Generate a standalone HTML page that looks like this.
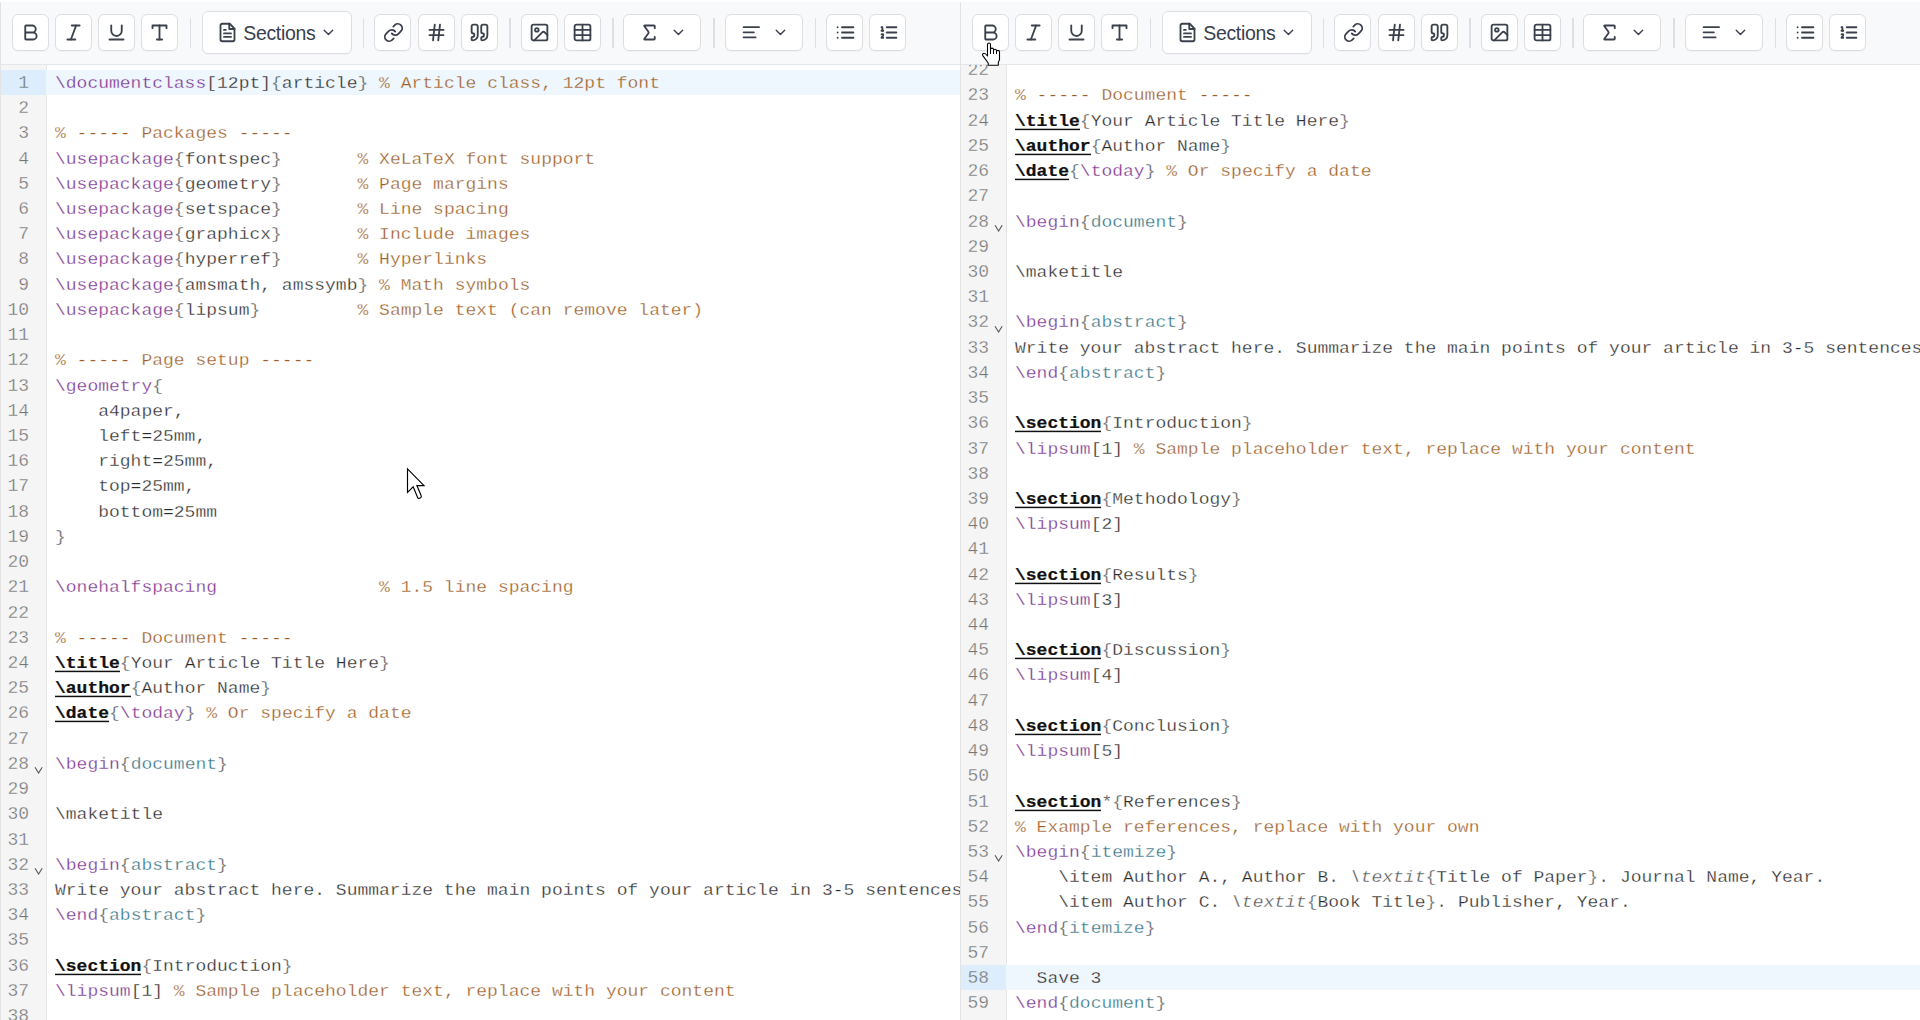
<!DOCTYPE html>
<html><head><meta charset="utf-8"><style>
*{margin:0;padding:0;box-sizing:border-box}
html,body{width:1920px;height:1020px;overflow:hidden;background:#fff}
body{position:relative;font-family:"Liberation Sans",sans-serif}
.pane{position:absolute;top:0;width:960px;height:1020px;overflow:hidden;background:#fff}
.pbord{position:absolute;left:0;top:2px;width:1px;height:1018px;background:#e3e3e3;z-index:5}
.tb{position:absolute;left:0;top:0;width:960px;height:65px;background:#f8f9fb;border-bottom:1px solid #e4e6ea}
.tb:before{content:'';position:absolute;left:0;top:0;width:960px;height:2px;background:#fff}
.btn{position:absolute;background:#fff;border:1px solid #dcdee2;border-radius:6px;box-shadow:0 1px 1px rgba(0,0,0,.03)}
.sep{position:absolute;top:17.5px;width:1.5px;height:30px;background:#dcdfe3}
.ic{position:absolute;color:#3a404c}
.stxt{position:absolute;font-size:19.5px;color:#3a404c;line-height:24px;letter-spacing:-0.35px}
.ed{position:absolute;left:0;top:65px;width:960px;height:955px;overflow:hidden}
.gut{position:absolute;left:0;top:0;width:47px;height:955px;background:#f5f5f5;border-right:1px solid #e6e6e6}
.ln{-webkit-text-stroke:0.3px #fff;position:absolute;left:0;width:960px;height:25.22px;font-family:"Liberation Mono",monospace;font-size:18px;line-height:25.2px;white-space:pre;color:#2b2b2b}
.ln.act{background:#eef6fe;-webkit-text-stroke-color:#eef6fe}
.ln.act .num{background:#ddedfc;-webkit-text-stroke-color:#ddedfc}
.num{-webkit-text-stroke-color:#f5f5f5;position:absolute;left:0;top:1px;width:29px;height:25.2px;text-align:right;color:#767676;display:block;padding-left:0}
.ln.act .num{width:46px;padding-right:17px;top:0;padding-top:1px;height:25.22px}
.fold{position:absolute;left:34.2px;top:15.2px}
.code{position:absolute;left:55px;top:1px;transform:scaleY(0.88);transform-origin:0 17.4px}
.cmd{color:#7a3290}
.br{color:#555d62}
.c{color:#9c5d26}
.env{color:#347486}
.b{font-weight:bold;color:#111;-webkit-text-stroke:0.25px #111;background:linear-gradient(#111,#111) 0 18.2px/100% 1.7px no-repeat}
.it{font-style:italic;color:#555}
.cur{position:absolute;left:0;top:0}
</style></head><body>
<div class="pane" style="left:0px">
<div class="tb">
<div class="btn" style="left:11.5px;top:14px;width:37px;height:37px"></div>
<svg class="ic" style="left:19.7px;top:21.5px" width="21" height="21" viewBox="0 0 24 24" fill="none" stroke="currentColor" stroke-width="2.1" stroke-linecap="round" stroke-linejoin="round"><path d="M6 12h9a4 4 0 0 1 0 8H7a1 1 0 0 1-1-1V5a1 1 0 0 1 1-1h7a4 4 0 0 1 0 8"/></svg>
<div class="btn" style="left:54.7px;top:14px;width:37px;height:37px"></div>
<svg class="ic" style="left:62.9px;top:21.5px" width="21" height="21" viewBox="0 0 24 24" fill="none" stroke="currentColor" stroke-width="2.1" stroke-linecap="round" stroke-linejoin="round"><line x1="19" x2="10" y1="4" y2="4"/><line x1="14" x2="5" y1="20" y2="20"/><line x1="15" x2="9" y1="4" y2="20"/></svg>
<div class="btn" style="left:97.9px;top:14px;width:37px;height:37px"></div>
<svg class="ic" style="left:106.1px;top:21.5px" width="21" height="21" viewBox="0 0 24 24" fill="none" stroke="currentColor" stroke-width="2.1" stroke-linecap="round" stroke-linejoin="round"><path d="M6 4v6a6 6 0 0 0 12 0V4"/><line x1="4" x2="20" y1="20" y2="20"/></svg>
<div class="btn" style="left:141.10000000000002px;top:14px;width:37px;height:37px"></div>
<svg class="ic" style="left:149.3px;top:21.5px" width="21" height="21" viewBox="0 0 24 24" fill="none" stroke="currentColor" stroke-width="2.1" stroke-linecap="round" stroke-linejoin="round"><polyline points="4 7 4 4 20 4 20 7"/><line x1="9" x2="15" y1="20" y2="20"/><line x1="12" x2="12" y1="4" y2="20"/></svg>
<div class="sep" style="left:189.5px"></div>
<div class="btn" style="left:201.5px;top:11px;width:150px;height:42.5px"></div>
<svg class="ic" style="left:217.3px;top:21.5px" width="21" height="21" viewBox="0 0 24 24" fill="none" stroke="currentColor" stroke-width="2.1" stroke-linecap="round" stroke-linejoin="round"><path d="M14.5 2H6a2 2 0 0 0-2 2v16a2 2 0 0 0 2 2h12a2 2 0 0 0 2-2V7.5L14.5 2z"/><polyline points="14 2 14 8 20 8"/><line x1="16" x2="8" y1="13" y2="13"/><line x1="16" x2="8" y1="17" y2="17"/><line x1="10" x2="8" y1="9" y2="9"/></svg>
<div class="stxt" style="left:243.3px;top:21px">Sections</div>
<svg class="ic" style="left:319.8px;top:24.2px" width="16.9" height="16.9" viewBox="0 0 24 24" fill="none" stroke="currentColor" stroke-width="2" stroke-linecap="round" stroke-linejoin="round"><path d="m6 9 6 6 6-6"/></svg>
<div class="sep" style="left:362.5px"></div>
<div class="btn" style="left:374.4px;top:14px;width:37px;height:37px"></div>
<svg class="ic" style="left:382.6px;top:21.5px" width="21" height="21" viewBox="0 0 24 24" fill="none" stroke="currentColor" stroke-width="2.1" stroke-linecap="round" stroke-linejoin="round"><path d="M10 13a5 5 0 0 0 7.54.54l3-3a5 5 0 0 0-7.07-7.07l-1.72 1.71"/><path d="M14 11a5 5 0 0 0-7.54-.54l-3 3a5 5 0 0 0 7.07 7.07l1.71-1.71"/></svg>
<div class="btn" style="left:417.5px;top:14px;width:37px;height:37px"></div>
<svg class="ic" style="left:425.7px;top:21.5px" width="21" height="21" viewBox="0 0 24 24" fill="none" stroke="currentColor" stroke-width="2.1" stroke-linecap="round" stroke-linejoin="round"><line x1="4" x2="20" y1="9" y2="9"/><line x1="4" x2="20" y1="15" y2="15"/><line x1="10" x2="8" y1="3" y2="21"/><line x1="16" x2="14" y1="3" y2="21"/></svg>
<div class="btn" style="left:460.59999999999997px;top:14px;width:37px;height:37px"></div>
<svg class="ic" style="left:468.8px;top:21.5px" width="21" height="21" viewBox="0 0 24 24" fill="none" stroke="currentColor" stroke-width="2.1" stroke-linecap="round" stroke-linejoin="round"><path d="M16 3a2 2 0 0 0-2 2v6a2 2 0 0 0 2 2 1 1 0 0 1 1 1v1a2 2 0 0 1-2 2 1 1 0 0 0-1 1v2a1 1 0 0 0 1 1 6 6 0 0 0 6-6V5a2 2 0 0 0-2-2z"/><path d="M5 3a2 2 0 0 0-2 2v6a2 2 0 0 0 2 2 1 1 0 0 1 1 1v1a2 2 0 0 1-2 2 1 1 0 0 0-1 1v2a1 1 0 0 0 1 1 6 6 0 0 0 6-6V5a2 2 0 0 0-2-2z"/></svg>
<div class="sep" style="left:509px"></div>
<div class="btn" style="left:520.6px;top:14px;width:37px;height:37px"></div>
<svg class="ic" style="left:528.8px;top:21.5px" width="21" height="21" viewBox="0 0 24 24" fill="none" stroke="currentColor" stroke-width="2.1" stroke-linecap="round" stroke-linejoin="round"><rect width="18" height="18" x="3" y="3" rx="2" ry="2"/><circle cx="9" cy="9" r="2"/><path d="m21 15-3.086-3.086a2 2 0 0 0-2.828 0L6 21"/></svg>
<div class="btn" style="left:563.6px;top:14px;width:37px;height:37px"></div>
<svg class="ic" style="left:571.8px;top:21.5px" width="21" height="21" viewBox="0 0 24 24" fill="none" stroke="currentColor" stroke-width="2.1" stroke-linecap="round" stroke-linejoin="round"><path d="M12 3v18"/><rect width="18" height="18" x="3" y="3" rx="2"/><path d="M3 9h18"/><path d="M3 15h18"/></svg>
<div class="sep" style="left:612px"></div>
<div class="btn" style="left:623.3px;top:14px;width:78px;height:37px"></div>
<svg class="ic" style="left:639.2px;top:21.5px" width="21" height="21" viewBox="0 0 24 24" fill="none" stroke="currentColor" stroke-width="2.1" stroke-linecap="round" stroke-linejoin="round"><path d="M18 7V5a1 1 0 0 0-1-1H6.5a.5.5 0 0 0-.4.8l4.5 6a2 2 0 0 1 0 2.4l-4.5 6a.5.5 0 0 0 .4.8H17a1 1 0 0 0 1-1v-2"/></svg>
<svg class="ic" style="left:669.6px;top:24.2px" width="16.9" height="16.9" viewBox="0 0 24 24" fill="none" stroke="currentColor" stroke-width="2" stroke-linecap="round" stroke-linejoin="round"><path d="m6 9 6 6 6-6"/></svg>
<div class="sep" style="left:713px"></div>
<div class="btn" style="left:725.3px;top:14px;width:78px;height:37px"></div>
<svg class="ic" style="left:741.1px;top:21.8px" width="20.6" height="20.6" viewBox="0 0 24 24" fill="none" stroke="currentColor" stroke-width="2.1" stroke-linecap="round" stroke-linejoin="round"><line x1="21" x2="3" y1="6" y2="6"/><line x1="15" x2="3" y1="12" y2="12"/><line x1="17" x2="3" y1="18" y2="18"/></svg>
<svg class="ic" style="left:771.6px;top:24.2px" width="16.9" height="16.9" viewBox="0 0 24 24" fill="none" stroke="currentColor" stroke-width="2" stroke-linecap="round" stroke-linejoin="round"><path d="m6 9 6 6 6-6"/></svg>
<div class="sep" style="left:814.8px"></div>
<div class="btn" style="left:826.4px;top:14px;width:37px;height:37px"></div>
<svg class="ic" style="left:834.6px;top:21.5px" width="21" height="21" viewBox="0 0 24 24" fill="none" stroke="currentColor" stroke-width="2.1" stroke-linecap="round" stroke-linejoin="round"><path d="M3 12h.01"/><path d="M3 18h.01"/><path d="M3 6h.01"/><path d="M8 12h13"/><path d="M8 18h13"/><path d="M8 6h13"/></svg>
<div class="btn" style="left:869.4px;top:14px;width:37px;height:37px"></div>
<svg class="ic" style="left:877.6px;top:21.5px" width="21" height="21" viewBox="0 0 24 24" fill="none" stroke="currentColor" stroke-width="2.1" stroke-linecap="round" stroke-linejoin="round"><path d="M10 12h11"/><path d="M10 18h11"/><path d="M10 6h11"/><path d="M4 10h2"/><path d="M4 6h1v4"/><path d="M6 18H4c0-1 2-2 2-3s-1-1.5-2-1"/></svg>
</div>
<div class="ed">
<div class="gut"></div>
<div class="ln act" style="top:4.90px"><span class="num">1</span><span class="code"><span class="cmd">\documentclass</span>[12pt]<span class="br">{</span>article<span class="br">}</span> <span class="c">% Article class, 12pt font</span></span></div>
<div class="ln" style="top:30.12px"><span class="num">2</span><span class="code"></span></div>
<div class="ln" style="top:55.34px"><span class="num">3</span><span class="code"><span class="c">% ----- Packages -----</span></span></div>
<div class="ln" style="top:80.56px"><span class="num">4</span><span class="code"><span class="cmd">\usepackage</span><span class="br">{</span>fontspec<span class="br">}</span>       <span class="c">% XeLaTeX font support</span></span></div>
<div class="ln" style="top:105.78px"><span class="num">5</span><span class="code"><span class="cmd">\usepackage</span><span class="br">{</span>geometry<span class="br">}</span>       <span class="c">% Page margins</span></span></div>
<div class="ln" style="top:131.00px"><span class="num">6</span><span class="code"><span class="cmd">\usepackage</span><span class="br">{</span>setspace<span class="br">}</span>       <span class="c">% Line spacing</span></span></div>
<div class="ln" style="top:156.22px"><span class="num">7</span><span class="code"><span class="cmd">\usepackage</span><span class="br">{</span>graphicx<span class="br">}</span>       <span class="c">% Include images</span></span></div>
<div class="ln" style="top:181.44px"><span class="num">8</span><span class="code"><span class="cmd">\usepackage</span><span class="br">{</span>hyperref<span class="br">}</span>       <span class="c">% Hyperlinks</span></span></div>
<div class="ln" style="top:206.66px"><span class="num">9</span><span class="code"><span class="cmd">\usepackage</span><span class="br">{</span>amsmath, amssymb<span class="br">}</span> <span class="c">% Math symbols</span></span></div>
<div class="ln" style="top:231.88px"><span class="num">10</span><span class="code"><span class="cmd">\usepackage</span><span class="br">{</span>lipsum<span class="br">}</span>         <span class="c">% Sample text (can remove later)</span></span></div>
<div class="ln" style="top:257.10px"><span class="num">11</span><span class="code"></span></div>
<div class="ln" style="top:282.32px"><span class="num">12</span><span class="code"><span class="c">% ----- Page setup -----</span></span></div>
<div class="ln" style="top:307.54px"><span class="num">13</span><span class="code"><span class="cmd">\geometry</span><span class="br">{</span></span></div>
<div class="ln" style="top:332.76px"><span class="num">14</span><span class="code">    a4paper,</span></div>
<div class="ln" style="top:357.98px"><span class="num">15</span><span class="code">    left=25mm,</span></div>
<div class="ln" style="top:383.20px"><span class="num">16</span><span class="code">    right=25mm,</span></div>
<div class="ln" style="top:408.42px"><span class="num">17</span><span class="code">    top=25mm,</span></div>
<div class="ln" style="top:433.64px"><span class="num">18</span><span class="code">    bottom=25mm</span></div>
<div class="ln" style="top:458.86px"><span class="num">19</span><span class="code"><span class="br">}</span></span></div>
<div class="ln" style="top:484.08px"><span class="num">20</span><span class="code"></span></div>
<div class="ln" style="top:509.30px"><span class="num">21</span><span class="code"><span class="cmd">\onehalfspacing</span>               <span class="c">% 1.5 line spacing</span></span></div>
<div class="ln" style="top:534.52px"><span class="num">22</span><span class="code"></span></div>
<div class="ln" style="top:559.74px"><span class="num">23</span><span class="code"><span class="c">% ----- Document -----</span></span></div>
<div class="ln" style="top:584.96px"><span class="num">24</span><span class="code"><span class="b">\title</span><span class="br">{</span>Your Article Title Here<span class="br">}</span></span></div>
<div class="ln" style="top:610.18px"><span class="num">25</span><span class="code"><span class="b">\author</span><span class="br">{</span>Author Name<span class="br">}</span></span></div>
<div class="ln" style="top:635.40px"><span class="num">26</span><span class="code"><span class="b">\date</span><span class="br">{</span><span class="cmd">\today</span><span class="br">}</span> <span class="c">% Or specify a date</span></span></div>
<div class="ln" style="top:660.62px"><span class="num">27</span><span class="code"></span></div>
<div class="ln" style="top:685.84px"><span class="num">28</span><svg class="fold" width="10" height="8" viewBox="0 0 10 8"><path d="M1 1.2 L4.6 7 L8.2 1.2" fill="none" stroke="#5a5a5a" stroke-width="1.15"/></svg><span class="code"><span class="cmd">\begin</span><span class="br">{</span><span class="env">document</span><span class="br">}</span></span></div>
<div class="ln" style="top:711.06px"><span class="num">29</span><span class="code"></span></div>
<div class="ln" style="top:736.28px"><span class="num">30</span><span class="code">\maketitle</span></div>
<div class="ln" style="top:761.50px"><span class="num">31</span><span class="code"></span></div>
<div class="ln" style="top:786.72px"><span class="num">32</span><svg class="fold" width="10" height="8" viewBox="0 0 10 8"><path d="M1 1.2 L4.6 7 L8.2 1.2" fill="none" stroke="#5a5a5a" stroke-width="1.15"/></svg><span class="code"><span class="cmd">\begin</span><span class="br">{</span><span class="env">abstract</span><span class="br">}</span></span></div>
<div class="ln" style="top:811.94px"><span class="num">33</span><span class="code">Write your abstract here. Summarize the main points of your article in 3-5 sentences.</span></div>
<div class="ln" style="top:837.16px"><span class="num">34</span><span class="code"><span class="cmd">\end</span><span class="br">{</span><span class="env">abstract</span><span class="br">}</span></span></div>
<div class="ln" style="top:862.38px"><span class="num">35</span><span class="code"></span></div>
<div class="ln" style="top:887.60px"><span class="num">36</span><span class="code"><span class="b">\section</span><span class="br">{</span>Introduction<span class="br">}</span></span></div>
<div class="ln" style="top:912.82px"><span class="num">37</span><span class="code"><span class="cmd">\lipsum</span>[1] <span class="c">% Sample placeholder text, replace with your content</span></span></div>
<div class="ln" style="top:938.04px"><span class="num">38</span><span class="code"></span></div>
</div><div class="pbord"></div></div>
<div class="pane" style="left:960px">
<div class="tb">
<div class="btn" style="left:11.5px;top:14px;width:37px;height:37px"></div>
<svg class="ic" style="left:19.7px;top:21.5px" width="21" height="21" viewBox="0 0 24 24" fill="none" stroke="currentColor" stroke-width="2.1" stroke-linecap="round" stroke-linejoin="round"><path d="M6 12h9a4 4 0 0 1 0 8H7a1 1 0 0 1-1-1V5a1 1 0 0 1 1-1h7a4 4 0 0 1 0 8"/></svg>
<div class="btn" style="left:54.7px;top:14px;width:37px;height:37px"></div>
<svg class="ic" style="left:62.9px;top:21.5px" width="21" height="21" viewBox="0 0 24 24" fill="none" stroke="currentColor" stroke-width="2.1" stroke-linecap="round" stroke-linejoin="round"><line x1="19" x2="10" y1="4" y2="4"/><line x1="14" x2="5" y1="20" y2="20"/><line x1="15" x2="9" y1="4" y2="20"/></svg>
<div class="btn" style="left:97.9px;top:14px;width:37px;height:37px"></div>
<svg class="ic" style="left:106.1px;top:21.5px" width="21" height="21" viewBox="0 0 24 24" fill="none" stroke="currentColor" stroke-width="2.1" stroke-linecap="round" stroke-linejoin="round"><path d="M6 4v6a6 6 0 0 0 12 0V4"/><line x1="4" x2="20" y1="20" y2="20"/></svg>
<div class="btn" style="left:141.10000000000002px;top:14px;width:37px;height:37px"></div>
<svg class="ic" style="left:149.3px;top:21.5px" width="21" height="21" viewBox="0 0 24 24" fill="none" stroke="currentColor" stroke-width="2.1" stroke-linecap="round" stroke-linejoin="round"><polyline points="4 7 4 4 20 4 20 7"/><line x1="9" x2="15" y1="20" y2="20"/><line x1="12" x2="12" y1="4" y2="20"/></svg>
<div class="sep" style="left:189.5px"></div>
<div class="btn" style="left:201.5px;top:11px;width:150px;height:42.5px"></div>
<svg class="ic" style="left:217.3px;top:21.5px" width="21" height="21" viewBox="0 0 24 24" fill="none" stroke="currentColor" stroke-width="2.1" stroke-linecap="round" stroke-linejoin="round"><path d="M14.5 2H6a2 2 0 0 0-2 2v16a2 2 0 0 0 2 2h12a2 2 0 0 0 2-2V7.5L14.5 2z"/><polyline points="14 2 14 8 20 8"/><line x1="16" x2="8" y1="13" y2="13"/><line x1="16" x2="8" y1="17" y2="17"/><line x1="10" x2="8" y1="9" y2="9"/></svg>
<div class="stxt" style="left:243.3px;top:21px">Sections</div>
<svg class="ic" style="left:319.8px;top:24.2px" width="16.9" height="16.9" viewBox="0 0 24 24" fill="none" stroke="currentColor" stroke-width="2" stroke-linecap="round" stroke-linejoin="round"><path d="m6 9 6 6 6-6"/></svg>
<div class="sep" style="left:362.5px"></div>
<div class="btn" style="left:374.4px;top:14px;width:37px;height:37px"></div>
<svg class="ic" style="left:382.6px;top:21.5px" width="21" height="21" viewBox="0 0 24 24" fill="none" stroke="currentColor" stroke-width="2.1" stroke-linecap="round" stroke-linejoin="round"><path d="M10 13a5 5 0 0 0 7.54.54l3-3a5 5 0 0 0-7.07-7.07l-1.72 1.71"/><path d="M14 11a5 5 0 0 0-7.54-.54l-3 3a5 5 0 0 0 7.07 7.07l1.71-1.71"/></svg>
<div class="btn" style="left:417.5px;top:14px;width:37px;height:37px"></div>
<svg class="ic" style="left:425.7px;top:21.5px" width="21" height="21" viewBox="0 0 24 24" fill="none" stroke="currentColor" stroke-width="2.1" stroke-linecap="round" stroke-linejoin="round"><line x1="4" x2="20" y1="9" y2="9"/><line x1="4" x2="20" y1="15" y2="15"/><line x1="10" x2="8" y1="3" y2="21"/><line x1="16" x2="14" y1="3" y2="21"/></svg>
<div class="btn" style="left:460.59999999999997px;top:14px;width:37px;height:37px"></div>
<svg class="ic" style="left:468.8px;top:21.5px" width="21" height="21" viewBox="0 0 24 24" fill="none" stroke="currentColor" stroke-width="2.1" stroke-linecap="round" stroke-linejoin="round"><path d="M16 3a2 2 0 0 0-2 2v6a2 2 0 0 0 2 2 1 1 0 0 1 1 1v1a2 2 0 0 1-2 2 1 1 0 0 0-1 1v2a1 1 0 0 0 1 1 6 6 0 0 0 6-6V5a2 2 0 0 0-2-2z"/><path d="M5 3a2 2 0 0 0-2 2v6a2 2 0 0 0 2 2 1 1 0 0 1 1 1v1a2 2 0 0 1-2 2 1 1 0 0 0-1 1v2a1 1 0 0 0 1 1 6 6 0 0 0 6-6V5a2 2 0 0 0-2-2z"/></svg>
<div class="sep" style="left:509px"></div>
<div class="btn" style="left:520.6px;top:14px;width:37px;height:37px"></div>
<svg class="ic" style="left:528.8px;top:21.5px" width="21" height="21" viewBox="0 0 24 24" fill="none" stroke="currentColor" stroke-width="2.1" stroke-linecap="round" stroke-linejoin="round"><rect width="18" height="18" x="3" y="3" rx="2" ry="2"/><circle cx="9" cy="9" r="2"/><path d="m21 15-3.086-3.086a2 2 0 0 0-2.828 0L6 21"/></svg>
<div class="btn" style="left:563.6px;top:14px;width:37px;height:37px"></div>
<svg class="ic" style="left:571.8px;top:21.5px" width="21" height="21" viewBox="0 0 24 24" fill="none" stroke="currentColor" stroke-width="2.1" stroke-linecap="round" stroke-linejoin="round"><path d="M12 3v18"/><rect width="18" height="18" x="3" y="3" rx="2"/><path d="M3 9h18"/><path d="M3 15h18"/></svg>
<div class="sep" style="left:612px"></div>
<div class="btn" style="left:623.3px;top:14px;width:78px;height:37px"></div>
<svg class="ic" style="left:639.2px;top:21.5px" width="21" height="21" viewBox="0 0 24 24" fill="none" stroke="currentColor" stroke-width="2.1" stroke-linecap="round" stroke-linejoin="round"><path d="M18 7V5a1 1 0 0 0-1-1H6.5a.5.5 0 0 0-.4.8l4.5 6a2 2 0 0 1 0 2.4l-4.5 6a.5.5 0 0 0 .4.8H17a1 1 0 0 0 1-1v-2"/></svg>
<svg class="ic" style="left:669.6px;top:24.2px" width="16.9" height="16.9" viewBox="0 0 24 24" fill="none" stroke="currentColor" stroke-width="2" stroke-linecap="round" stroke-linejoin="round"><path d="m6 9 6 6 6-6"/></svg>
<div class="sep" style="left:713px"></div>
<div class="btn" style="left:725.3px;top:14px;width:78px;height:37px"></div>
<svg class="ic" style="left:741.1px;top:21.8px" width="20.6" height="20.6" viewBox="0 0 24 24" fill="none" stroke="currentColor" stroke-width="2.1" stroke-linecap="round" stroke-linejoin="round"><line x1="21" x2="3" y1="6" y2="6"/><line x1="15" x2="3" y1="12" y2="12"/><line x1="17" x2="3" y1="18" y2="18"/></svg>
<svg class="ic" style="left:771.6px;top:24.2px" width="16.9" height="16.9" viewBox="0 0 24 24" fill="none" stroke="currentColor" stroke-width="2" stroke-linecap="round" stroke-linejoin="round"><path d="m6 9 6 6 6-6"/></svg>
<div class="sep" style="left:814.8px"></div>
<div class="btn" style="left:826.4px;top:14px;width:37px;height:37px"></div>
<svg class="ic" style="left:834.6px;top:21.5px" width="21" height="21" viewBox="0 0 24 24" fill="none" stroke="currentColor" stroke-width="2.1" stroke-linecap="round" stroke-linejoin="round"><path d="M3 12h.01"/><path d="M3 18h.01"/><path d="M3 6h.01"/><path d="M8 12h13"/><path d="M8 18h13"/><path d="M8 6h13"/></svg>
<div class="btn" style="left:869.4px;top:14px;width:37px;height:37px"></div>
<svg class="ic" style="left:877.6px;top:21.5px" width="21" height="21" viewBox="0 0 24 24" fill="none" stroke="currentColor" stroke-width="2.1" stroke-linecap="round" stroke-linejoin="round"><path d="M10 12h11"/><path d="M10 18h11"/><path d="M10 6h11"/><path d="M4 10h2"/><path d="M4 6h1v4"/><path d="M6 18H4c0-1 2-2 2-3s-1-1.5-2-1"/></svg>
</div>
<div class="ed">
<div class="gut"></div>
<div class="ln" style="top:-7.80px"><span class="num">22</span><span class="code"></span></div>
<div class="ln" style="top:17.42px"><span class="num">23</span><span class="code"><span class="c">% ----- Document -----</span></span></div>
<div class="ln" style="top:42.64px"><span class="num">24</span><span class="code"><span class="b">\title</span><span class="br">{</span>Your Article Title Here<span class="br">}</span></span></div>
<div class="ln" style="top:67.86px"><span class="num">25</span><span class="code"><span class="b">\author</span><span class="br">{</span>Author Name<span class="br">}</span></span></div>
<div class="ln" style="top:93.08px"><span class="num">26</span><span class="code"><span class="b">\date</span><span class="br">{</span><span class="cmd">\today</span><span class="br">}</span> <span class="c">% Or specify a date</span></span></div>
<div class="ln" style="top:118.30px"><span class="num">27</span><span class="code"></span></div>
<div class="ln" style="top:143.52px"><span class="num">28</span><svg class="fold" width="10" height="8" viewBox="0 0 10 8"><path d="M1 1.2 L4.6 7 L8.2 1.2" fill="none" stroke="#5a5a5a" stroke-width="1.15"/></svg><span class="code"><span class="cmd">\begin</span><span class="br">{</span><span class="env">document</span><span class="br">}</span></span></div>
<div class="ln" style="top:168.74px"><span class="num">29</span><span class="code"></span></div>
<div class="ln" style="top:193.96px"><span class="num">30</span><span class="code">\maketitle</span></div>
<div class="ln" style="top:219.18px"><span class="num">31</span><span class="code"></span></div>
<div class="ln" style="top:244.40px"><span class="num">32</span><svg class="fold" width="10" height="8" viewBox="0 0 10 8"><path d="M1 1.2 L4.6 7 L8.2 1.2" fill="none" stroke="#5a5a5a" stroke-width="1.15"/></svg><span class="code"><span class="cmd">\begin</span><span class="br">{</span><span class="env">abstract</span><span class="br">}</span></span></div>
<div class="ln" style="top:269.62px"><span class="num">33</span><span class="code">Write your abstract here. Summarize the main points of your article in 3-5 sentences.</span></div>
<div class="ln" style="top:294.84px"><span class="num">34</span><span class="code"><span class="cmd">\end</span><span class="br">{</span><span class="env">abstract</span><span class="br">}</span></span></div>
<div class="ln" style="top:320.06px"><span class="num">35</span><span class="code"></span></div>
<div class="ln" style="top:345.28px"><span class="num">36</span><span class="code"><span class="b">\section</span><span class="br">{</span>Introduction<span class="br">}</span></span></div>
<div class="ln" style="top:370.50px"><span class="num">37</span><span class="code"><span class="cmd">\lipsum</span>[1] <span class="c">% Sample placeholder text, replace with your content</span></span></div>
<div class="ln" style="top:395.72px"><span class="num">38</span><span class="code"></span></div>
<div class="ln" style="top:420.94px"><span class="num">39</span><span class="code"><span class="b">\section</span><span class="br">{</span>Methodology<span class="br">}</span></span></div>
<div class="ln" style="top:446.16px"><span class="num">40</span><span class="code"><span class="cmd">\lipsum</span>[2]</span></div>
<div class="ln" style="top:471.38px"><span class="num">41</span><span class="code"></span></div>
<div class="ln" style="top:496.60px"><span class="num">42</span><span class="code"><span class="b">\section</span><span class="br">{</span>Results<span class="br">}</span></span></div>
<div class="ln" style="top:521.82px"><span class="num">43</span><span class="code"><span class="cmd">\lipsum</span>[3]</span></div>
<div class="ln" style="top:547.04px"><span class="num">44</span><span class="code"></span></div>
<div class="ln" style="top:572.26px"><span class="num">45</span><span class="code"><span class="b">\section</span><span class="br">{</span>Discussion<span class="br">}</span></span></div>
<div class="ln" style="top:597.48px"><span class="num">46</span><span class="code"><span class="cmd">\lipsum</span>[4]</span></div>
<div class="ln" style="top:622.70px"><span class="num">47</span><span class="code"></span></div>
<div class="ln" style="top:647.92px"><span class="num">48</span><span class="code"><span class="b">\section</span><span class="br">{</span>Conclusion<span class="br">}</span></span></div>
<div class="ln" style="top:673.14px"><span class="num">49</span><span class="code"><span class="cmd">\lipsum</span>[5]</span></div>
<div class="ln" style="top:698.36px"><span class="num">50</span><span class="code"></span></div>
<div class="ln" style="top:723.58px"><span class="num">51</span><span class="code"><span class="b">\section</span>*<span class="br">{</span>References<span class="br">}</span></span></div>
<div class="ln" style="top:748.80px"><span class="num">52</span><span class="code"><span class="c">% Example references, replace with your own</span></span></div>
<div class="ln" style="top:774.02px"><span class="num">53</span><svg class="fold" width="10" height="8" viewBox="0 0 10 8"><path d="M1 1.2 L4.6 7 L8.2 1.2" fill="none" stroke="#5a5a5a" stroke-width="1.15"/></svg><span class="code"><span class="cmd">\begin</span><span class="br">{</span><span class="env">itemize</span><span class="br">}</span></span></div>
<div class="ln" style="top:799.24px"><span class="num">54</span><span class="code">    \item Author A., Author B. <span class="it">\textit</span><span class="br">{</span>Title of Paper<span class="br">}</span>. Journal Name, Year.</span></div>
<div class="ln" style="top:824.46px"><span class="num">55</span><span class="code">    \item Author C. <span class="it">\textit</span><span class="br">{</span>Book Title<span class="br">}</span>. Publisher, Year.</span></div>
<div class="ln" style="top:849.68px"><span class="num">56</span><span class="code"><span class="cmd">\end</span><span class="br">{</span><span class="env">itemize</span><span class="br">}</span></span></div>
<div class="ln" style="top:874.90px"><span class="num">57</span><span class="code"></span></div>
<div class="ln act" style="top:900.12px"><span class="num">58</span><span class="code">  Save 3</span></div>
<div class="ln" style="top:925.34px"><span class="num">59</span><span class="code"><span class="cmd">\end</span><span class="br">{</span><span class="env">document</span><span class="br">}</span></span></div>
</div><div class="pbord"></div></div>
<svg class="cur" style="left:0;top:0;z-index:20" width="1920" height="1020"><path d="M407.5 468.8 L407.5 492.3 L413.2 486.8 L417.6 497.4 Q418.3 498.8 419.6 498.2 L420.6 497.7 Q421.8 497 421.2 495.7 L416.9 485.6 L424 485.6 Z" fill="#fff" stroke="#000" stroke-width="1.15" stroke-linejoin="miter"/></svg>
<svg class="cur" style="left:0;top:0;z-index:20" width="1920" height="1020"><path d="M987.5 56 L987.5 44.6 Q987.5 43 989 43 Q990.5 43 990.5 44.6 L990.5 49.6 Q990.5 48.1 992 48.1 Q993.5 48.1 993.5 49.6 L993.5 50.6 Q993.5 49.2 995 49.2 Q996.5 49.2 996.5 50.6 L996.5 51.8 Q996.5 50.4 998 50.4 Q999.5 50.4 999.5 52 L999.5 59.6 L998.3 62.4 L998.3 65.2 L988.2 65.2 L988.2 63 L982.8 55.6 Q982 54 983.4 53.4 Q985 52.8 987.5 56 Z" fill="#fff" stroke="#000" stroke-width="1.1" stroke-linejoin="round"/><path d="M990.5 49.6 V54 M993.5 50.6 V54 M996.5 51.8 V54" stroke="#000" stroke-width="1" fill="none"/></svg>
</body></html>
